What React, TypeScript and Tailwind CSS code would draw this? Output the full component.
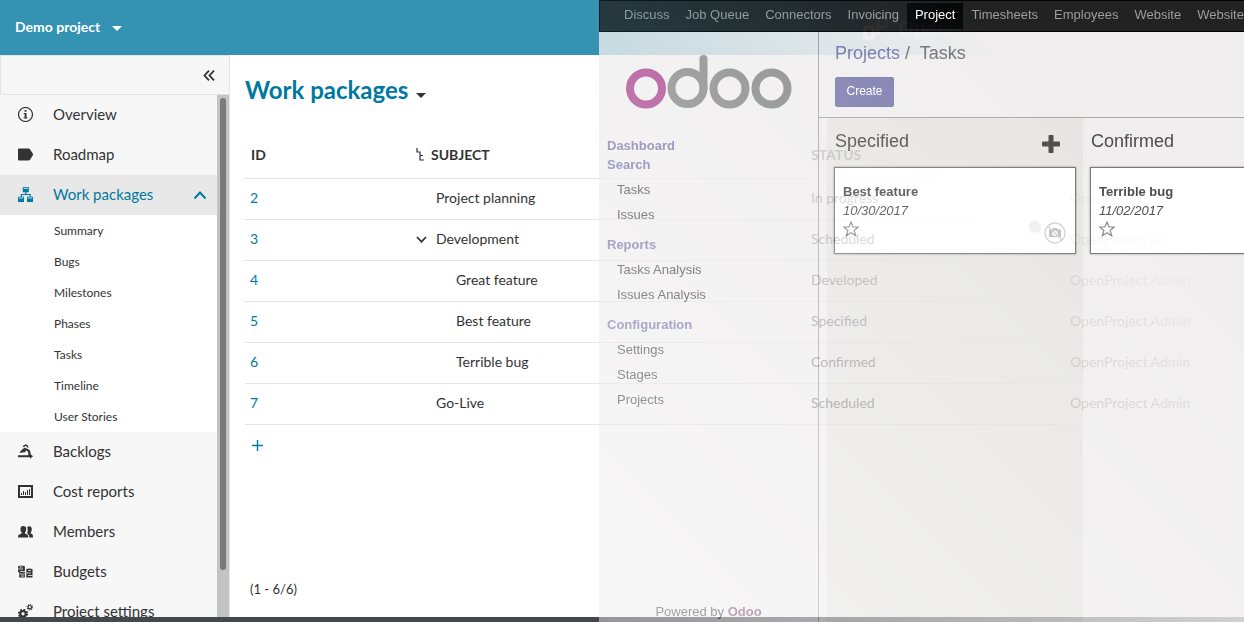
import React from "react";

const submenu = ["Summary", "Bugs", "Milestones", "Phases", "Tasks", "Timeline", "User Stories"];

const packages = [
  { id: 2, subject: "Project planning", level: 0, status: "In progress" },
  { id: 3, subject: "Development", level: 0, open: true, status: "Scheduled" },
  { id: 4, subject: "Great feature", level: 1, status: "Developed" },
  { id: 5, subject: "Best feature", level: 1, status: "Specified" },
  { id: 6, subject: "Terrible bug", level: 1, status: "Confirmed" },
  { id: 7, subject: "Go-Live", level: 0, status: "Scheduled" },
];

const apps = ["Discuss", "Job Queue", "Connectors", "Invoicing", "Project", "Timesheets", "Employees", "Website", "Website Admin"];

const odooMenu = [
  { title: "Dashboard", items: [] },
  { title: "Search", items: ["Tasks", "Issues"] },
  { title: "Reports", items: ["Tasks Analysis", "Issues Analysis"] },
  { title: "Configuration", items: ["Settings", "Stages", "Projects"] },
];

function Caret({ className }: { className: string }) {
  return (
    <svg viewBox="0 0 10 5" className={className} fill="currentColor" aria-hidden="true">
      <path d="M0 0h10L5 5z" />
    </svg>
  );
}

const icons: Record<string, React.ReactNode> = {
  Overview: (
    <>
      <circle cx="7.5" cy="7.5" r="7" fill="none" stroke="currentColor" strokeWidth="1.2" />
      <path d="M6.600 3h1.900v1.700H6.600zM5.600 6h2.900v4.600h1V11.500H5.600v-.9h1V6.900h-1z" />
    </>
  ),
  Roadmap: <path d="M1 1.500h9.500q1 0 1.500.8l3 4.700v1l-3 4.700q-.5.800-1.500.8H1q-1 0-1-1v-10q0-1 1-1z" />,
  "Work packages": (
    <>
      <path d="M4.800 0h6v5.300h-6zM0 9.700h6V15H0zM9 9.700h6V15H9zM7.200 5h1.200v2h4.400v3h-1.200V8H4v2H2.800V7h4.400z" />
      <path d="M5.600 1.300h4.400M.8 11h4.400M9.800 11h4.400" stroke="#fff" strokeWidth=".8" />
    </>
  ),
  Backlogs: (
    <>
      <path d="M5.500 3Q6 1 8 1.200 9.800 1.500 9.800 3.500" fill="none" stroke="currentColor" strokeWidth="1.500" />
      <path d="M4.500 7.500Q6 5 8.500 5.500q3 .8 3 4 0 1.500-.8 3" fill="none" stroke="currentColor" strokeWidth="2.200" />
      <path d="M7.500 3.500v4.500L1.500 9q1.500-3.500 6-5.500zM0 11.300h12V9.800l3 2.500-3 2.500v-1.500H0z" />
    </>
  ),
  "Cost reports": (
    <>
      <rect x="1" y="2" width="13" height="11" fill="none" stroke="currentColor" strokeWidth="2" />
      <path d="M3 9h1v2H3zM5 7h1v4H5zM7 8h1v3H7zM9 6h1v5H9zM11 5h1v6h-1z" />
    </>
  ),
  Members: (
    <path d="M5.300 2q2.900 0 2.900 3 0 2.300-1.200 3.400v1l2.500 1.300q.8.500.8 2.800H0q0-2.300.8-2.800L3.600 9.400v-1Q2.400 7.300 2.400 5q0-3 2.900-3zM9.300 3.300Q9.800 2.200 11.200 2.200q2.600 0 2.600 3 0 2-1.100 3.200v1l1.600.8q.7.500.7 3.300h-3.600q0-2.300-1.200-2.900l-.8-.5V8.800Q10.300 6.500 9.300 3.300z" />
  ),
  Budgets: (
    <>
      <path d="M0 3q0-1.500 3.500-1.500T7 3v10.500H1.200V9L0 7.500zM8.300 5q3.200-1.200 6.200 0v8.500H8.300z" />
      <path d="M0 5h5M2 7.500h5M1.500 10h5M1.500 3h3M3 12h3M10 6.500h3M8.300 9h4.500M10 11.500h4.500" stroke="#f7f7f7" strokeWidth=".8" />
      <path d="M7.300 3v11" stroke="#f7f7f7" strokeWidth=".6" />
    </>
  ),
  "Project settings": (
    <>
      <circle cx="5" cy="9.800" r="2.800" fill="none" stroke="currentColor" strokeWidth="2.200" />
      <circle cx="5" cy="9.800" r="4.300" fill="none" stroke="currentColor" strokeWidth="1.800" strokeDasharray="1.700 1.680" />
      <circle cx="11.800" cy="3.200" r="1.700" fill="none" stroke="currentColor" strokeWidth="1.200" />
      <circle cx="11.800" cy="3.200" r="2.700" fill="none" stroke="currentColor" strokeWidth="1.100" strokeDasharray="1.060 1.060" />
    </>
  ),
};

function NavItem({ label, active }: { label: string; active?: boolean }) {
  return (
    <a
      href="#"
      className={
        active
          ? "flex h-10 items-center bg-[#e8e8e8] pr-[11px] pb-[2px] pl-[18px] text-[#00799f]"
          : "flex h-10 items-center pr-[11px] pb-[2px] pl-[18px] text-[#333333]"
      }
    >
      <svg viewBox="0 0 15 15" className="mr-5 size-[15px] shrink-0" fill="currentColor" aria-hidden="true">
        {icons[label]}
      </svg>
      <span className="grow text-[15px]">{label}</span>
      {active && (
        <svg viewBox="0 0 12 8" className="mt-[2px] h-2 w-3" fill="none" stroke="currentColor" strokeWidth="2" aria-hidden="true">
          <path d="M.5 7.500L6 1.500l5.500 6" />
        </svg>
      )}
    </a>
  );
}

function Sidebar() {
  return (
    <aside className="flex w-[230px] shrink-0 flex-col border-r border-[#e6e6e6] bg-[#f7f7f7]">
      <div className="flex h-10 shrink-0 items-center justify-end border border-r-0 border-[#e4e4e4] pr-[14px]">
        <button aria-label="Collapse menu" className="text-[#333333]">
          <svg viewBox="0 0 12 11" className="h-[11px] w-3" fill="none" stroke="currentColor" strokeWidth="1.800" aria-hidden="true">
            <path d="M6 .7L1.500 5.500 6 10.300M11 .7L6.500 5.500 11 10.300" />
          </svg>
        </button>
      </div>
      <div className="flex min-h-0 grow">
        <nav className="min-w-0 grow overflow-hidden">
          <NavItem label="Overview" />
          <NavItem label="Roadmap" />
          <NavItem label="Work packages" active />
          <ul className="bg-white">
            {submenu.map((s) => (
              <li key={s}>
                <a href="#" className="flex h-[31px] items-center pl-[54px] text-xs text-[#333333]">{s}</a>
              </li>
            ))}
          </ul>
          <NavItem label="Backlogs" />
          <NavItem label="Cost reports" />
          <NavItem label="Members" />
          <NavItem label="Budgets" />
          <NavItem label="Project settings" />
        </nav>
        <div className="w-3 shrink-0 bg-[#c1c4c3] px-[3px] pt-[3px]">
          <div className="h-[91%] rounded-full bg-[#777b7b]" />
        </div>
      </div>
    </aside>
  );
}

function WorkPackages() {
  return (
    <main className="flex min-w-0 grow flex-col bg-white pl-[15px] text-[#333333]">
      <h1 className="mt-[18px] flex h-[34px] items-center text-2xl font-bold text-[#00799f]">
        Work packages
        <Caret className="mt-[10px] ml-2 h-[5px] w-[10px] text-[#333333]" />
      </h1>
      <table className="mt-[25px] w-full table-fixed border-collapse text-sm">
        <thead>
          <tr className="h-[46px] border-b border-[#e4e4e4] text-left">
            <th className="w-[166px] pl-[6px] font-bold">ID</th>
            <th className="w-[395px] pl-[5px] font-bold">
              <span className="flex items-center gap-[7px]">
                <svg viewBox="0 0 8 13" className="h-[13px] w-2" fill="none" stroke="currentColor" strokeWidth="1.200" aria-hidden="true">
                  <path d="M1 0v4h3v8h4M4 7.500h3" />
                </svg>
                SUBJECT
              </span>
            </th>
            <th className="w-[259px] pl-[5px] font-bold">STATUS</th>
            <th className="pl-[5px] font-bold">ASSIGNEE</th>
          </tr>
        </thead>
        <tbody>
          {packages.map((p) => (
            <tr key={p.id} className="h-[41px] border-b border-[#e4e4e4]">
              <td className="pb-[2px] pl-[5px]"><a href="#" className="text-[#00799f]">{p.id}</a></td>
              <td className={p.level ? "pb-[2px] pl-[45px]" : "pb-[2px] pl-[5px]"}>
                <span className="flex items-center">
                  {!p.level && (
                    <span className="w-5 shrink-0">
                      {p.open && (
                        <svg viewBox="0 0 11 7" className="mt-[2px] h-[7px] w-[11px]" fill="none" stroke="currentColor" strokeWidth="1.800" aria-hidden="true">
                          <path d="M1 1l4.500 4.800L10 1" />
                        </svg>
                      )}
                    </span>
                  )}
                  {p.subject}
                </span>
              </td>
              <td className="pb-[2px] pl-[5px]">{p.status}</td>
              <td className="pb-[2px] pl-[5px]">OpenProject Admin</td>
            </tr>
          ))}
        </tbody>
      </table>
      <button aria-label="Create work package" className="mt-[15px] ml-[7px] size-[11px] text-[#00799f]">
        <svg viewBox="0 0 11 11" className="size-[11px]" stroke="currentColor" strokeWidth="1.400" aria-hidden="true">
          <path d="M5.500 0v11M0 5.500h11" />
        </svg>
      </button>
      <p className="mt-auto mb-[18px] pl-[5px] text-[13px] leading-5">(1 - 6/6)</p>
    </main>
  );
}

function OpenProject() {
  return (
    <div className="flex h-full flex-col font-[Lato,sans-serif]">
      <header className="flex h-[55px] shrink-0 items-center bg-[#3493b3] pl-[15px] text-white">
        <button className="flex w-[848px] shrink-0 items-center gap-3 pb-px text-sm font-bold">
          Demo project
          <Caret className="mt-[2px] h-[5px] w-[10px]" />
        </button>
        <svg viewBox="0 0 25 24" className="h-6 w-[25px] shrink-0" fill="none" stroke="currentColor" strokeWidth="4" aria-hidden="true">
          <rect x="2" y="11" width="8" height="11" rx="2" />
          <path d="M15 18V2h6q2 0 2 2v5q0 2-2 2h-5" />
        </svg>
        <span className="ml-[10px] font-['Liberation_Sans_Narrow','Liberation_Sans',sans-serif] text-xl font-bold">OpenProject</span>
      </header>
      <div className="flex min-h-0 grow">
        <Sidebar />
        <WorkPackages />
      </div>
      <div className="h-[5px] shrink-0 bg-[#43484d]" />
    </div>
  );
}

function OdooLogo() {
  return (
    <svg viewBox="0 0 166 54" className="h-[54px] w-[166px]" fill="none" stroke="#8a8c8b" strokeWidth="8" role="img" aria-label="odoo">
      <circle cx="20" cy="33.500" r="16" stroke="#ad4b93" />
      <circle cx="61.500" cy="33" r="16" />
      <path d="M77.500 33V4" strokeLinecap="round" />
      <circle cx="103.500" cy="33.500" r="16" />
      <circle cx="145.500" cy="33.500" r="16" />
    </svg>
  );
}

function Card({ title, date, avatar }: { title: string; date: string; avatar?: boolean }) {
  return (
    <article className="mt-[13px] flex h-[87px] justify-between border border-[#777777] bg-white pt-[14px] pr-[9px] pl-2 text-[13px] shadow-[0_0_2px_rgba(0,0,0,0.4)]">
      <div className="leading-[19px]">
        <h3 className="font-bold text-[#4c4c4c]">{title}</h3>
        <p className="text-[#4c4c4c] italic">{date}</p>
        <button aria-label="Mark as important" className="mt-px block text-[#888888]">
          <svg viewBox="0 0 16 16" className="size-4" fill="none" stroke="currentColor" strokeWidth="1.200" aria-hidden="true">
            <path d="M8 1l2 5h5.300l-4.200 3.500 1.600 5.200L8 11.700l-4.700 3 1.600-5.200L.7 6H6z" />
          </svg>
        </button>
      </div>
      {avatar && (
        <div className="flex items-start gap-[3px] pt-[39px]">
          <span className="size-3 rounded-full bg-[#f0eeee]" />
          <svg viewBox="0 0 22 22" className="mt-px size-[22px]" fill="none" stroke="#d2d2d2" strokeWidth="1.400" aria-hidden="true">
            <circle cx="11" cy="11" r="10" />
            <path d="M5 7.500h3L9 6h4l1 1.500h3V15H5z" fill="#c0c0c0" stroke="none" />
            <circle cx="11" cy="11.300" r="2.700" fill="#fff" stroke="none" />
            <path d="M4 4l14 14" />
          </svg>
        </div>
      )}
    </article>
  );
}

function Odoo() {
  return (
    <div className="absolute inset-y-0 right-0 left-[599px] flex flex-col overflow-hidden bg-[#f0eeee] mask-[linear-gradient(45deg,rgba(0,0,0,0.47),#000_77%)] font-['Liberation_Sans',Arial,sans-serif] text-[13px] text-[#4c4c4c]">
      <nav className="flex h-8 shrink-0 items-start border border-r-0 border-black bg-[#222222] pt-[2px] pl-4 whitespace-nowrap text-[#9d9d9d]">
        {apps.map((a) => (
          <a key={a} href="#" className={a === "Project" ? "h-[26px] bg-[#080808] px-2 leading-6 text-white" : "h-[26px] px-2 leading-6"}>
            {a}
          </a>
        ))}
      </nav>
      <div className="flex min-h-0 grow">
        <aside className="flex w-[220px] shrink-0 flex-col border-r border-[#a9a9b1]">
          <div className="flex justify-center pt-[23px]"><OdooLogo /></div>
          <nav className="mt-[27px] px-2">
            {odooMenu.map((g) => (
              <section key={g.title}>
                <h2 className="h-[19px] leading-[19px] font-bold text-[#7c7bad]">{g.title}</h2>
                {g.items.length > 0 && (
                  <ul className="pt-[3px] pb-2 pl-[10px]">
                    {g.items.map((i) => (
                      <li key={i}><a href="#" className="block h-[25px] leading-[25px]">{i}</a></li>
                    ))}
                  </ul>
                )}
              </section>
            ))}
          </nav>
          <p className="mt-auto mb-px text-center leading-[19px]">
            Powered by <a href="#" className="font-bold text-[#875a7b]">Odoo</a>
          </p>
        </aside>
        <main className="flex min-w-0 grow flex-col">
          <header className="h-[86px] shrink-0 border-b border-[#a9a9ac] pt-[10px] pl-4">
            <div className="text-lg leading-[22px] whitespace-pre text-[#777777]">
              <a href="#" className="text-[#7c7bad]">Projects</a>{" /  "}Tasks
            </div>
            <button className="mt-[13px] h-[30px] w-[59px] rounded-xs border border-[#7c7bad] bg-[#7f7eb0] pb-[2px] text-xs text-white">Create</button>
          </header>
          <div className="flex grow pl-2">
            <section className="w-64 shrink-0 bg-[#e7e6e4] px-[7px] pt-[11px]">
              <div className="flex items-start justify-between pr-4">
                <h2 className="pl-px text-lg leading-6">Specified</h2>
                <button aria-label="Add task" className="mt-[6px] size-[18px]">
                  <svg viewBox="0 0 18 18" className="size-[18px]" aria-hidden="true" fill="currentColor">
                    <rect x="6.500" width="5" height="18" rx="1" />
                    <rect y="6.500" width="18" height="5" rx="1" />
                  </svg>
                </button>
              </div>
              <div className="pt-px">
                <Card title="Best feature" date="10/30/2017" avatar />
              </div>
            </section>
            <section className="w-64 shrink-0 px-[7px] pt-[11px]">
              <h2 className="pl-px text-lg leading-6">Confirmed</h2>
              <div className="pt-px">
                <Card title="Terrible bug" date="11/02/2017" avatar />
              </div>
            </section>
          </div>
        </main>
      </div>
    </div>
  );
}

export default function App() {
  return (
    <div className="relative h-screen min-h-[400px] overflow-hidden">
      <OpenProject />
      <Odoo />
    </div>
  );
}
